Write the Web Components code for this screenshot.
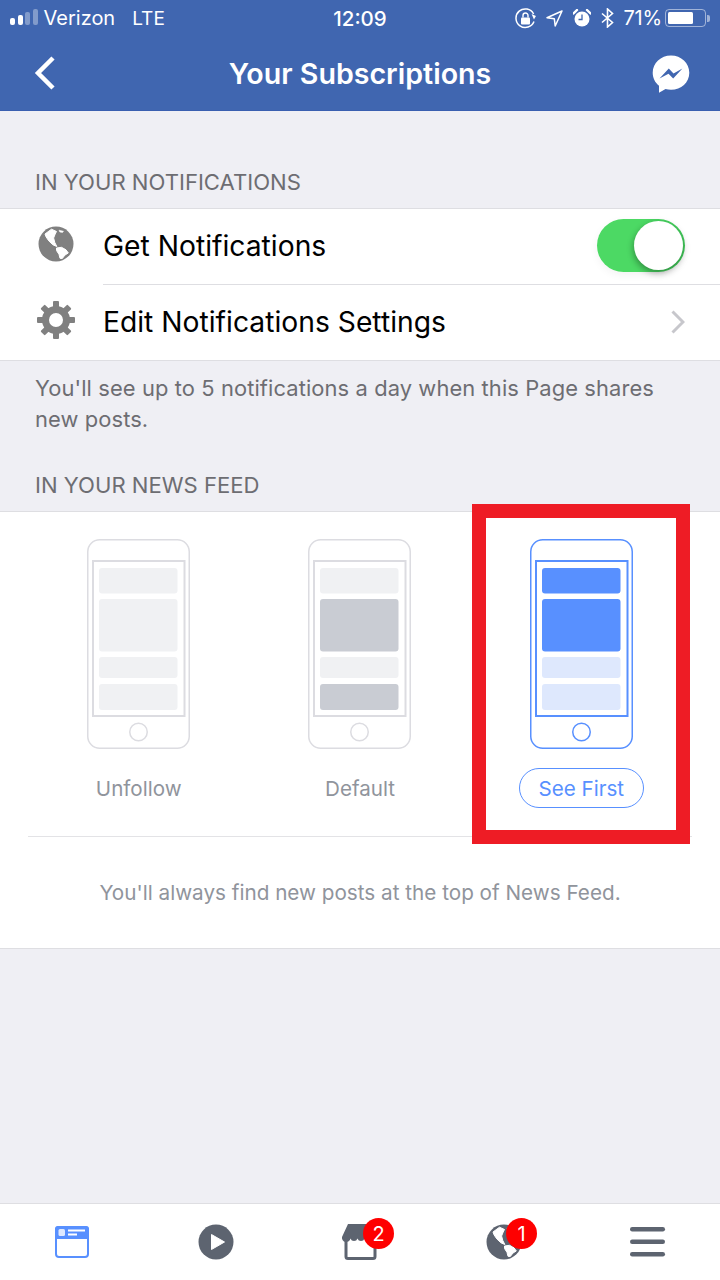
<!DOCTYPE html>
<html>
<head>
<meta charset="utf-8">
<style>
  html, body { margin: 0; padding: 0; }
  body { width: 720px; height: 1280px; background: #efeff4; font-family: Inter, "Liberation Sans", sans-serif; overflow: hidden; }
</style>
</head>
<body>
<subs-page></subs-page>

<script>
// shared icon bits
const GLOBE = (bg, land) => `
  <circle cx="18" cy="18" r="17.5" fill="${bg}"/>
  <g fill="${land}" stroke="${land}" stroke-width="1" stroke-linejoin="round">
    <path d="M9 6.500L13.500 3.200 18.500 5.500 17.200 8 15.600 12 16.800 16.500 18.800 20.500 14.900 18.800 10.800 14.900 8 10.800 7 8z"/>
    <path d="M18.500 22L23.500 21.300 28 23.800 30.300 27 27 29 24.300 32.500 22 32.300 21 28.400 18.500 24.500z"/>
    <path d="M21 4.200L25.500 5.200 24.500 6.500 21.800 6z" stroke-width=".5"/>
  </g>`;

const gearTeeth = Array.from({ length: 8 }, (_, i) =>
  `<rect x="16" y="0" width="6" height="9" rx="1" transform="rotate(${i * 45} 19 19)"/>`).join("");

const ICONS = {
  globe: `<svg width="36" height="36" viewBox="0 0 36 36">${GLOBE("#808080", "#fff")}</svg>`,
  gear: `<svg width="38" height="38" viewBox="0 0 38 38" fill="#808080">${gearTeeth}
    <circle cx="19" cy="19" r="10.500" fill="none" stroke="#808080" stroke-width="7"/></svg>`
};

// status bar
const statusTemplate = document.createElement("template");
statusTemplate.innerHTML = `
  <style>
    :host { display: grid; grid-template-columns: 1fr auto 1fr; align-items: center; height: 36px; color: #fff; font-size: 20px; }
    .left { display: flex; align-items: center; padding-left: 10px; }
    .signal { display: flex; align-items: flex-end; gap: 2.500px; height: 16px; margin-right: 6px; margin-top: -2px; }
    .signal i { display: block; width: 5px; background: #fff; border-radius: 2px; }
    .signal i.off { background: rgba(255,255,255,.35); }
    .lte { margin-left: 17px; font-size: 19px; }
    .time { font-weight: 500; font-size: 20.500px; }
    .right { display: flex; align-items: center; justify-content: flex-end; padding-right: 10px; }
    .right svg { display: block; }
    .pct { margin-left: 10px; margin-right: 3px; letter-spacing: -.2px; }
    .battery { position: relative; width: 41px; height: 18px; box-sizing: border-box; border: 1.500px solid rgba(255,255,255,.5); border-radius: 4px; padding: 2px; }
    .battery b { display: block; width: 71%; height: 100%; background: #fff; border-radius: 1.500px; }
    .nub { width: 3px; height: 7px; margin-left: 1px; background: rgba(255,255,255,.5); border-radius: 0 2px 2px 0; }
  </style>
  <div class="left">
    <div class="signal"><i style="height:7px"></i><i style="height:10px"></i><i class="off" style="height:13px"></i><i class="off" style="height:16px"></i></div>
    <span>Verizon</span><span class="lte">LTE</span>
  </div>
  <div class="time">12:09</div>
  <div class="right">
    <svg width="21" height="21" viewBox="0 0 21 21" style="margin-right:10px">
      <path d="M19 13.500A9.300 9.300 0 1 1 18.600 6" fill="none" stroke="#fff" stroke-width="1.500"/>
      <path d="M16 6.500l4.800.6L20 11z" fill="#fff" transform="rotate(18 18 8)"/>
      <rect x="6" y="9.500" width="9" height="7" rx="1" fill="#fff"/>
      <path d="M8 9.500V7.500a2.500 2.500 0 0 1 5 0v2" fill="none" stroke="#fff" stroke-width="1.400"/>
    </svg>
    <svg width="17" height="17" viewBox="0 0 17 17" style="margin-right:10px">
      <path d="M16 1L1 7.800l7.300.9.900 7.300z" fill="none" stroke="#fff" stroke-width="1.500" stroke-linejoin="round"/>
    </svg>
    <svg width="18" height="18" viewBox="0 0 18 18" style="margin-right:10px">
      <circle cx="9" cy="10" r="7.500" fill="#fff"/>
      <path d="M9 5.500V10.500H5.500" fill="none" stroke="#4066b0" stroke-width="1.300"/>
      <path d="M.500 4.500L4 1M17.500 4.500L14 1" stroke="#fff" stroke-width="2.400" stroke-linecap="round"/>
    </svg>
    <svg width="13" height="20" viewBox="0 0 13 20">
      <path d="M1 5.500l10.500 9-5 4.500V1l5 4.500L1 14.500" fill="none" stroke="#fff" stroke-width="1.600"/>
    </svg>
    <span class="pct">71%</span>
    <div class="battery"><b></b></div><div class="nub"></div>
  </div>`;

class FbStatusBar extends HTMLElement {
  constructor() {
    super();
    this.attachShadow({ mode: "open" }).appendChild(statusTemplate.content.cloneNode(true));
  }
}
customElements.define("fb-status-bar", FbStatusBar);

// blue header
const navTemplate = document.createElement("template");
navTemplate.innerHTML = `
  <style>
    :host { display: block; background: #4066b0; border-bottom: 1px solid #3a5fb0; box-sizing: border-box; height: 111px; }
    .bar { display: grid; grid-template-columns: 1fr auto 1fr; align-items: center; height: 74px; color: #fff; }
    .back { padding-left: 33px; display: flex; }
    .title { font-size: 28.600px; font-weight: 600; margin-top: 1px; }
    .msg { display: flex; justify-content: flex-end; padding-right: 30px; margin-top: 2px; }
    svg { display: block; }
  </style>
  <fb-status-bar></fb-status-bar>
  <div class="bar">
    <div class="back">
      <svg width="24" height="36" viewBox="0 0 24 36"><path d="M20 3L5 18l15 15" fill="none" stroke="#fff" stroke-width="4.500"/></svg>
    </div>
    <div class="title"><slot></slot></div>
    <div class="msg">
      <svg width="38" height="38" viewBox="0 0 38 38">
        <path fill="#fff" d="M19 .500C8.800.500.700 8 .700 17.700c0 5.300 2.400 9.800 6.300 13v7l6.500-3.600c1.700.5 3.500.7 5.500.7 10.200 0 18.300-7.500 18.300-17.100S29.200.500 19 .500z"/>
        <path fill="#4066b0" d="M7.500 23.500l9.300-9.900 4.700 4.800 8.900-4.800-9.200 9.900-4.700-4.800z"/>
      </svg>
    </div>
  </div>`;

class FbNav extends HTMLElement {
  constructor() {
    super();
    this.attachShadow({ mode: "open" }).appendChild(navTemplate.content.cloneNode(true));
  }
}
customElements.define("fb-nav", FbNav);

// grey uppercase label above a section
class FbLabel extends HTMLElement {
  constructor() {
    super();
    this.attachShadow({ mode: "open" }).innerHTML = `
      <style>
        :host { display: block; padding: 0 35px; font-size: 22.100px; line-height: 26px; color: #6d6d72; }
      </style>
      <slot></slot>`;
  }
}
customElements.define("fb-label", FbLabel);

// settings row
class FbRow extends HTMLElement {
  constructor() {
    super();
    this.attachShadow({ mode: "open" }).innerHTML = `
      <style>
        :host { display: flex; height: 76px; box-sizing: border-box; background: #fff; }
        .icon { width: 103px; display: flex; align-items: center; justify-content: center; padding: 0 27px 2px 36px; box-sizing: border-box; flex: none; }
        .body { flex: 1; display: flex; align-items: center; justify-content: space-between; font-size: 28.250px; color: #000; padding: 0 35px 2px 0; box-sizing: border-box; }
        :host([divider]) .body { border-bottom: 1.500px solid #dedee2; padding-bottom: 1px; }
        svg { display: block; }
      </style>
      <div class="icon"><slot name="icon"></slot></div>
      <div class="body"><span><slot></slot></span><slot name="end"></slot></div>`;
  }
  connectedCallback() {
    const name = this.getAttribute("icon");
    if (name && !this.querySelector("[slot=icon]")) {
      const holder = document.createElement("span");
      holder.slot = "icon";
      holder.style.display = "block";
      holder.innerHTML = ICONS[name];
      this.appendChild(holder);
    }
  }
}
customElements.define("fb-row", FbRow);

class FbSwitch extends HTMLElement {
  constructor() {
    super();
    this.attachShadow({ mode: "open" }).innerHTML = `
      <style>
        :host { display: flex; justify-content: flex-end; align-items: center; width: 88px; height: 53.500px; margin-top: -1px; box-sizing: border-box; padding-right: 2px; border-radius: 27px; background: linear-gradient(90deg, #4cd964 55%, #3fc457 100%); box-shadow: 0 3px 8px rgba(0,0,0,.05); }
        b { display: block; width: 49px; height: 49px; border-radius: 50%; background: #fff; box-shadow: -1px 3px 6px rgba(0,0,0,.32); }
      </style>
      <b></b>`;
  }
}
customElements.define("fb-switch", FbSwitch);

// phone mockup, the rects are the feed stories
class FbPhone extends HTMLElement {
  connectedCallback() {
    const line = this.getAttribute("line") || "#dcdce1";
    const fills = (this.getAttribute("fills") || "").split(",");
    const heights = [[29, 25.500], [60, 52.500], [118, 21], [145, 26]];
    const rects = heights.map((h, i) =>
      `<rect x="12" y="${h[0]}" width="78.500" height="${h[1]}" rx="3" fill="${fills[i]}"/>`).join("");
    this.attachShadow({ mode: "open" }).innerHTML = `
      <style>
        :host { display: block; width: 103px; height: 210px; }
        svg { display: block; }
      </style>
      <svg width="103" height="210" viewBox="0 0 103 210" fill="none" stroke="${line}" stroke-width="1.500">
        <rect x=".750" y=".750" width="101.500" height="208.500" rx="12"/>
        <rect x="6" y="22" width="91.500" height="155" stroke-width="2"/>
        <g stroke="none">${rects}</g>
        <circle cx="51.500" cy="193" r="8.750"/>
      </svg>`;
  }
}
customElements.define("fb-phone", FbPhone);

class FbFeedOption extends HTMLElement {
  constructor() {
    super();
    this.attachShadow({ mode: "open" }).innerHTML = `
      <style>
        :host { display: flex; flex-direction: column; align-items: center; }
        .name { margin-top: 19px; height: 40px; display: flex; align-items: center; padding: 0 19px; box-sizing: border-box; border-radius: 20px; font-size: 20.600px; color: #90949c; border: 1.500px solid transparent; }
        :host([selected]) .name { color: #5890ff; border-color: #5890ff; }
      </style>
      <slot name="phone"></slot>
      <div class="name"><slot></slot></div>`;
  }
}
customElements.define("fb-feed-option", FbFeedOption);

// bottom tabs
class FbTabBar extends HTMLElement {
  constructor() {
    super();
    this.attachShadow({ mode: "open" }).innerHTML = `
      <style>
        :host { display: grid; grid-template-columns: repeat(5, 1fr); height: 77px; box-sizing: border-box; background: #fff; border-top: 1.500px solid #dedee2; }
        .tab { position: relative; display: flex; align-items: center; justify-content: center; padding-top: 0; }
        .badge { position: absolute; top: 14px; width: 31px; height: 31px; border-radius: 50%; background: #fe0000; color: #fff; font-size: 20px; display: flex; align-items: center; justify-content: center; }
        svg { display: block; }
      </style>
      <div class="tab">
        <svg width="34" height="32" viewBox="0 0 34 32">
          <rect x="1" y="1" width="32" height="30" rx="3" fill="#fff" stroke="#5890ff" stroke-width="2"/>
          <path d="M3 0h28a3 3 0 0 1 3 3v10H0V3a3 3 0 0 1 3-3z" fill="#5890ff"/>
          <rect x="3.500" y="3" width="6.500" height="7" rx="1.500" fill="#dfe9ff"/>
          <path d="M13 4.500h17M13 8.500h9" stroke="#fff" stroke-width="1.800"/>
        </svg>
      </div>
      <div class="tab">
        <svg width="36" height="36" viewBox="0 0 36 36">
          <circle cx="18" cy="18" r="17.500" fill="#5d6470"/>
          <path d="M13.500 10.500l13 7.500-13 7.500z" fill="#fff" stroke="#fff" stroke-linejoin="round"/>
        </svg>
      </div>
      <div class="tab">
        <svg width="36" height="36" viewBox="0 0 36 36" style="margin-left:-1px">
          <path d="M4 16v16.500a2 2 0 0 0 2 2h25a2 2 0 0 0 2-2V16" fill="none" stroke="#5d6470" stroke-width="3"/>
          <path d="M6 0h25l5 13a3.500 3.500 0 0 1-6.500 1.500 3.700 3.700 0 0 1-7 0 3.700 3.700 0 0 1-7 0 3.700 3.700 0 0 1-7 0A3.500 3.500 0 0 1 0 13z" fill="#5d6470"/>
        </svg>
        <span class="badge" style="left:75px">2</span>
      </div>
      <div class="tab">
        <svg width="36" height="36" viewBox="0 0 36 36">${GLOBE("#5d6470", "#fff")}</svg>
        <span class="badge" style="left:74px">1</span>
      </div>
      <div class="tab">
        <svg width="36" height="30" viewBox="0 0 36 30" fill="#5d6470">
          <rect y="0" width="35" height="4.500" rx="2.200"/>
          <rect y="12.500" width="35" height="4.500" rx="2.200"/>
          <rect y="25" width="35" height="4.500" rx="2.200"/>
        </svg>
      </div>`;
  }
}
customElements.define("fb-tab-bar", FbTabBar);

// the whole screen
const pageTemplate = document.createElement("template");
pageTemplate.innerHTML = `
  <style>
    :host { display: flex; flex-direction: column; width: 720px; height: 1280px; position: relative; background: #efeff4; }
    .group { margin-top: 13px; background: #fff; border-top: 1.500px solid #dedee2; border-bottom: 1.500px solid #dedee2; }
    .group fb-row:last-child { height: 75px; }
    .note { padding: 12px 35px 0; font-size: 21.900px; line-height: 31px; color: #6d6d72; height: 111px; box-sizing: border-box; letter-spacing: .1px; }
    .feed { margin-top: 13px; height: 438px; box-sizing: border-box; background: #fff; border-top: 1.500px solid #dedee2; border-bottom: 1.500px solid #dedee2; padding: 27px 28px 0; }
    .options { display: grid; grid-template-columns: repeat(3, 1fr); height: 298px; box-sizing: border-box; border-bottom: 1.500px solid #e3e3e6; }
    .hint { text-align: center; font-size: 20.700px; line-height: 24px; color: #90949c; margin-top: 44px; }
    .spacer { flex: 1; }
    .mark { position: absolute; left: 472px; top: 504px; width: 218px; height: 340px; box-sizing: border-box; border: 14px solid #ee1c25; pointer-events: none; }
  </style>
  <fb-nav>Your Subscriptions</fb-nav>
  <fb-label style="margin-top:58px">IN YOUR NOTIFICATIONS</fb-label>
  <div class="group">
    <fb-row icon="globe" divider>Get Notifications<fb-switch slot="end"></fb-switch></fb-row>
    <fb-row icon="gear">Edit Notifications Settings
      <svg slot="end" width="14" height="24" viewBox="0 0 14 24"><path d="M1.500 1.500L12 12 1.500 22.500" fill="none" stroke="#c7c7cc" stroke-width="3"/></svg>
    </fb-row>
  </div>
  <div class="note">You'll see up to 5 notifications a day when this Page shares new posts.</div>
  <fb-label>IN YOUR NEWS FEED</fb-label>
  <div class="feed">
    <div class="options">
      <fb-feed-option>
        <fb-phone slot="phone" fills="#f0f1f3,#f0f1f3,#f0f1f3,#f0f1f3"></fb-phone>Unfollow
      </fb-feed-option>
      <fb-feed-option>
        <fb-phone slot="phone" fills="#f0f1f3,#c9ccd3,#f0f1f3,#c9ccd3"></fb-phone>Default
      </fb-feed-option>
      <fb-feed-option selected>
        <fb-phone slot="phone" line="#5890ff" fills="#5890ff,#5890ff,#dee8fd,#dee8fd"></fb-phone>See First
      </fb-feed-option>
    </div>
    <div class="hint">You'll always find new posts at the top of News Feed.</div>
  </div>
  <div class="spacer"></div>
  <fb-tab-bar></fb-tab-bar>
  <div class="mark"></div>`;

class SubsPage extends HTMLElement {
  constructor() {
    super();
    this.attachShadow({ mode: "open" }).appendChild(pageTemplate.content.cloneNode(true));
  }
}
customElements.define("subs-page", SubsPage);
</script>
</body>
</html>
